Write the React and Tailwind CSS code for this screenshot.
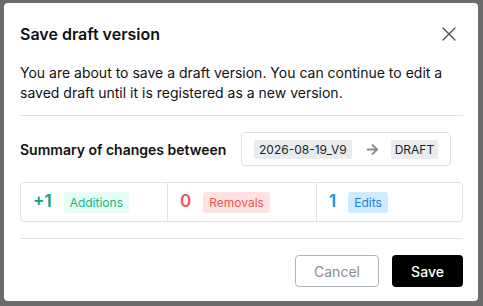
import React from 'react';
import { X } from 'lucide-react';
import { FaArrowRight } from 'react-icons/fa';

const stats = [
  { value: '+1', label: 'Additions', num: 'text-[#0ca678]', chip: 'bg-[#e6fcf5] text-[#12b886]' },
  { value: '0', label: 'Removals', num: 'text-[#fa5252]', chip: 'bg-[#ffe3e3] text-[#fa5252]' },
  { value: '1', label: 'Edits', num: 'text-[#228be6]', chip: 'bg-[#d0ebff] text-[#1c7ed6]' },
];

export default function App() {
  return (
    <div
      className="w-[483px] h-[306px] bg-[#6b6b6b] pt-[3px] pl-[4px] overflow-hidden"
      style={{ fontFamily: 'Inter, "Liberation Sans", sans-serif' }}
    >
      <div className="w-[474px] h-[298px] bg-white rounded-[4px] px-4 pt-[21px] text-[#111]">
        <div className="flex items-center justify-between w-[443px] h-[20px]">
          <h2 className="text-[16px] font-semibold leading-[20px] text-[#111]">Save draft version</h2>
          <button className="text-[#495057] mr-[2px]">
            <X size={24} strokeWidth={1.3} />
          </button>
        </div>

        <p className="mt-[19px] text-[14px] leading-[20px] text-[#111] pr-2">
          You are about to save a draft version. You can continue to edit a saved draft until it is registered as a new version.
        </p>

        <div className="mt-[12px] border-t border-[#dee2e6] w-[443px]" />

        <div className="flex items-center mt-[16px] w-[431px]">
          <span className="text-[14px] font-semibold flex-1 whitespace-nowrap">Summary of changes between</span>
          <div className="flex items-center shrink-0 h-[34px] w-[210px] border border-[#dee2e6] rounded-[4px] pl-[12px]">
            <span className="bg-[#e9ecef] rounded-[2px] px-[5px] text-[12px] leading-[19px] text-[#212529] whitespace-nowrap">2026-08-19_V9</span>
            <FaArrowRight size={13} className="text-[#868e96] ml-[14px] mr-[12px] shrink-0" />
            <span className="bg-[#e9ecef] rounded-[2px] px-[4px] text-[12px] leading-[19px] text-[#212529] whitespace-nowrap">DRAFT</span>
          </div>
        </div>

        <div className="mt-[16px] w-[443px] h-[40px] border border-[#dee2e6] rounded-[4px] grid grid-cols-[146px_149px_1fr]">
          {stats.map((s, i) => (
            <div
              key={s.label}
              className={`flex items-center pl-[12px] ${i > 0 ? 'border-l border-[#dee2e6]' : ''}`}
            >
              <span className={`text-[17px] font-semibold ${s.num}`}>{s.value}</span>
              <span className={`ml-[12px] rounded-[3px] px-[6px] text-[12px] leading-[21px] whitespace-nowrap ${s.chip}`}>
                {s.label}
              </span>
            </div>
          ))}
        </div>

        <div className="mt-[16px] border-t border-[#dee2e6] w-[443px]" />

        <div className="flex justify-end gap-[13px] mt-[16px] w-[443px]">
          <button className="w-[84px] h-[32px] border border-[#adb5bd] rounded-[4px] text-[14px] text-[#868e96]">
            Cancel
          </button>
          <button className="w-[71px] h-[32px] bg-black rounded-[4px] text-[14px] text-white font-medium">
            Save
          </button>
        </div>
      </div>
    </div>
  );
}
